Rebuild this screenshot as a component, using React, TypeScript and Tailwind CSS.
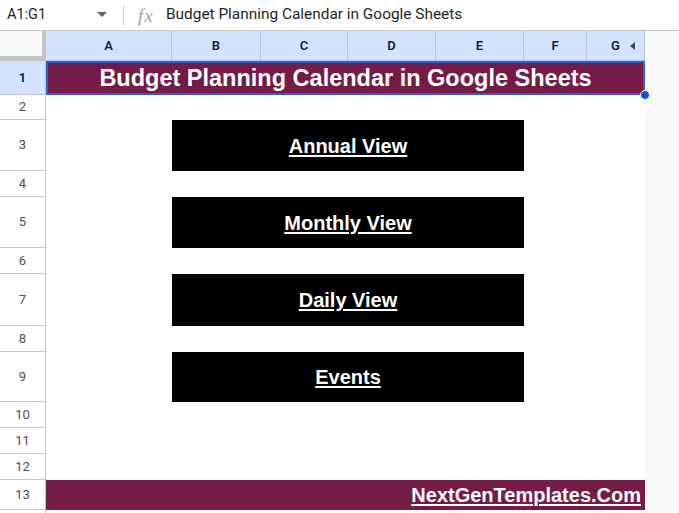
import React from "react";

const cols = ["A", "B", "C", "D", "E", "F", "G"];
const rowNums = [1, 2, 3, 4, 5, 6, 7, 8, 9, 10, 11, 12, 13];
const buttons = [
  { label: "Annual View", row: "row-start-4" },
  { label: "Monthly View", row: "row-start-6" },
  { label: "Daily View", row: "row-start-8" },
  { label: "Events", row: "row-start-10" },
];
const rowStart = [
  "row-start-2",
  "row-start-3",
  "row-start-4",
  "row-start-5",
  "row-start-6",
  "row-start-7",
  "row-start-8",
  "row-start-9",
  "row-start-10",
  "row-start-11",
  "row-start-12",
  "row-start-13",
  "row-start-14",
];
const colStart = [
  "col-start-2",
  "col-start-3",
  "col-start-4",
  "col-start-5",
  "col-start-6",
  "col-start-7",
  "col-start-8",
];

export default function App() {
  return (
    <div className="w-[679px] h-[513px] overflow-hidden bg-white flex flex-col font-['Roboto',sans-serif]">
      {/* formula bar */}
      <div className="h-[31px] shrink-0 flex items-center border-b border-[#c7c7c7] bg-white">
        <div className="w-[92px] pl-[7px] text-[14.5px] text-[#1f1f1f]">A1:G1</div>
        <svg width="10" height="6" viewBox="0 0 10 6" className="ml-[5px]">
          <path d="M0 0 L10 0 L5 5 Z" fill="#5f6368" />
        </svg>
        <div className="ml-[16px] w-px h-[20px] bg-[#d0d0d0]" />
        <div className="ml-[14px] w-[20px] text-[19px] leading-none italic text-[#a0a4a8] font-['Liberation_Serif',serif] tracking-[1px]">
          fx
        </div>
        <div className="ml-[8px] text-[15.4px] text-[#1f1f1f]">Budget Planning Calendar in Google Sheets</div>
      </div>

      {/* grid */}
      <div className="relative flex-1 grid grid-cols-[46px_126px_89px_87px_88px_88px_63px_58px_1fr] grid-rows-[30px_34px_25px_51px_26px_51px_26px_52px_26px_50px_26px_26px_26px_30px_1fr]">
        {/* corner */}
        <div className="col-start-1 row-start-1 bg-[#f8f9fa] border-r-[4px] border-b-[5px] border-[#c4c4c4]" />
        {/* column headers */}
        {cols.map((c, i) => (
          <div
            key={c}
            className={`${colStart[i]} row-start-1 relative bg-[#d3e3fd] border-r border-b border-[#b9c6dc] flex items-center justify-center text-[13px] font-semibold text-[#0b1d44]`}
          >
            {c}
            {c === "G" && (
              <svg width="5" height="8" viewBox="0 0 5 8" className="absolute right-[9px] top-[11px]">
                <path d="M5 0 L5 8 L0 4 Z" fill="#444746" />
              </svg>
            )}
          </div>
        ))}
        {/* right empty area */}
        <div className="col-start-9 row-start-1 row-span-15 bg-[#f8f9fa]" />

        {/* row headers */}
        {rowNums.map((n, i) => (
          <div
            key={n}
            className={`col-start-1 ${rowStart[i]} border-r border-b border-[#c4c7c5] flex items-center justify-center text-[13px] ${
              n === 1 ? "bg-[#d3e3fd] text-[#0b1d44] font-semibold" : "bg-white text-[#505050]"
            }`}
          >
            {n}
          </div>
        ))}
        <div className="col-start-1 row-start-15 border-r border-[#c4c7c5] bg-white" />

        {/* title */}
        <div className="col-start-2 col-span-7 row-start-2 bg-[#741b47] border-2 border-[#2d5fcf] flex items-center justify-center">
          <span className="text-white font-bold text-[23.5px] leading-none font-['Liberation_Sans',Arial,sans-serif] translate-y-[1px]">
            Budget Planning Calendar in Google Sheets
          </span>
        </div>

        {/* buttons */}
        {buttons.map((b) => (
          <div
            key={b.label}
            className={`col-start-3 col-span-4 ${b.row} bg-black flex items-center justify-center`}
          >
            <span className="text-white font-bold text-[20px] leading-none underline underline-offset-[2px] font-['Liberation_Sans',Arial,sans-serif]">
              {b.label}
            </span>
          </div>
        ))}

        {/* footer */}
        <div className="col-start-2 col-span-7 row-start-14 bg-[#741b47] flex items-center justify-end pr-[4px]">
          <span className="text-white font-bold text-[20px] leading-none underline underline-offset-[2px] font-['Liberation_Sans',Arial,sans-serif]">
            NextGenTemplates.Com
          </span>
        </div>

        {/* selection handle */}
        <div className="absolute left-[640px] top-[59px] w-[10px] h-[10px] rounded-full bg-[#0b57d0] border border-white" />
      </div>
    </div>
  );
}
